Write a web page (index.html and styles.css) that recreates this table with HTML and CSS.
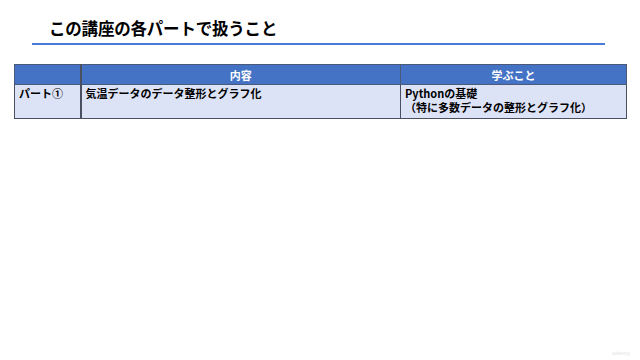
FILE: index.html
```html
<!DOCTYPE html>
<html lang="ja">
<head>
<meta charset="utf-8">
<link rel="stylesheet" href="styles.css">
</head>
<body>
<div class="slide">
  <header class="head">
    <h1 class="title">この講座の各パートで扱うこと</h1>
  </header>
  <table class="grid">
    <colgroup>
      <col class="c1"><col class="c2"><col class="c3">
    </colgroup>
    <thead>
      <tr><th></th><th>内容</th><th>学ぶこと</th></tr>
    </thead>
    <tbody>
      <tr>
        <td>パート①</td>
        <td>気温データのデータ整形とグラフ化</td>
        <td><span class="ln">Pythonの基礎</span><span class="ln">（特に多数データの整形とグラフ化）</span></td>
      </tr>
    </tbody>
  </table>
  <div class="mark">udemy</div>
</div>
</body>
</html>
```

FILE: styles.css
```css
* { box-sizing: border-box; }
html, body { margin: 0; padding: 0; background: #fff; }
body { font-family: "Noto Sans CJK JP", "Noto Sans", sans-serif; color: #000; }
.slide { width: 640px; height: 360px; position: relative; overflow: hidden; }
.head { margin: 0 35px 0 32px; padding: 14px 0 0 17px; border-bottom: 2px solid #4a7bd6; height: 45px; }
.title { margin: 0; font-size: 16.5px; line-height: 28px; font-weight: 700; letter-spacing: -0.2px; }
.grid { margin: 19px 0 0 14px; width: 612px; border-collapse: collapse; table-layout: fixed; font-size: 11px; font-weight: 700; }
.c1 { width: 66px; } .c2 { width: 320px; } .c3 { width: 226px; }
.grid th { background: #4472c4; color: #fff; height: 20px; padding: 0; text-align: center; border: 1px solid #4a5a78; font-weight: 700; line-height: 14px; }
.grid td { background: #dde3f6; height: 34px; vertical-align: top; padding: 1px 4px 0; border: 1px solid #4a5060; line-height: 14px; }
.ln { display: block; white-space: nowrap; }
.grid tbody td:first-child, .grid thead th:first-child { border-right: 2px solid #4a5060; }
.mark { position: absolute; right: 10px; bottom: 4px; font-size: 6px; color: #e4e4e4; font-family: "Liberation Sans", sans-serif; }
```
